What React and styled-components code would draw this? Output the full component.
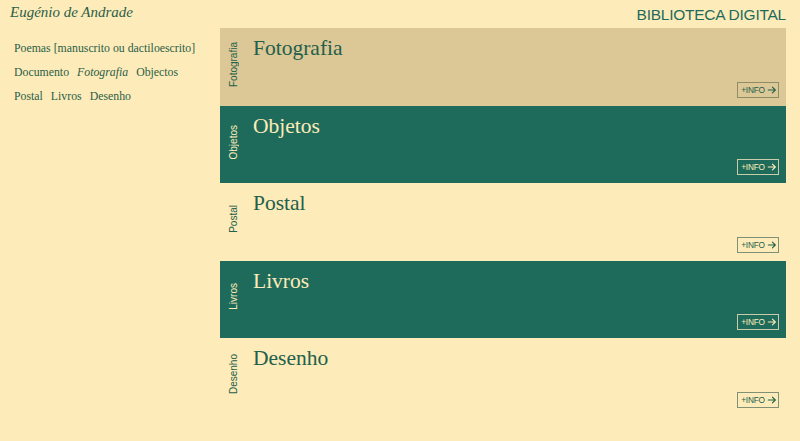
import React from "react";
import styled, { createGlobalStyle } from "styled-components";

const GlobalStyle = createGlobalStyle`
  html, body {
    margin: 0;
    padding: 0;
    background: #fdebb9;
  }
  body {
    font-family: "Liberation Serif", "Times New Roman", serif;
    color: #22604b;
  }
`;

const Page = styled.div`
  width: 800px;
  min-height: 441px;
  background: #fdebb9;
`;

const Header = styled.header`
  height: 28px;
  display: flex;
  align-items: center;
  justify-content: space-between;
  padding: 0 14px 0 10px;
  box-sizing: border-box;
`;

const Author = styled.h1`
  margin: 0;
  font-family: "Liberation Serif", serif;
  font-style: italic;
  font-weight: normal;
  font-size: 15px;
  color: #2b5e48;
  transform: translateY(-2px);
`;

const Brand = styled.div`
  font-family: "Liberation Sans", Arial, sans-serif;
  font-size: 15.5px;
  letter-spacing: -0.25px;
  color: #1f6b5b;
  transform: translateY(1px);
`;

const Body = styled.div`
  display: grid;
  grid-template-columns: 220px 1fr;
  padding-right: 14px;
`;

const Sidebar = styled.nav`
  padding: 8px 0 0 14px;
  display: flex;
  flex-direction: column;
`;

const NavRow = styled.div`
  display: flex;
  gap: 8px;
  height: 24px;
  align-items: center;
  font-size: 11.8px;
  color: #2b5e48;
`;

const NavLink = styled.span`
  font-style: ${(p) => (p.$active ? "italic" : "normal")};
`;

const List = styled.main`
  display: flex;
  flex-direction: column;
`;

const themes = {
  tan: { bg: "#dcc796", fg: "#22604b", title: "#22604b", border: "#8f8d66" },
  green: { bg: "#1f6b5b", fg: "#fdebb9", title: "#fdebb9", border: "#c9ccab" },
  plain: { bg: "#fdebb9", fg: "#22604b", title: "#22604b", border: "#7f9077" },
};

const Card = styled.section`
  height: 77.5px;
  display: grid;
  grid-template-columns: 26px 1fr;
  background: ${(p) => themes[p.$tone].bg};
  color: ${(p) => themes[p.$tone].fg};
`;

const SideLabel = styled.div`
  display: flex;
  align-items: center;
  justify-content: center;
  padding-left: 1px;
  padding-bottom: 5px;
`;

const SideText = styled.span`
  writing-mode: vertical-rl;
  transform: rotate(180deg);
  font-family: "Liberation Sans", Arial, sans-serif;
  font-size: 10px;
  white-space: nowrap;
`;

const Content = styled.div`
  display: flex;
  flex-direction: column;
  padding: 8px 7px 8px 7px;
`;

const Title = styled.h2`
  margin: 0;
  font-family: "Liberation Serif", serif;
  font-weight: normal;
  font-size: 21.5px;
  line-height: 24px;
  color: ${(p) => themes[p.$tone].title};
`;

const InfoButton = styled.button`
  margin-top: auto;
  align-self: flex-end;
  height: 16px;
  width: 42px;
  padding: 0 0 0 2px;
  display: flex;
  align-items: center;
  justify-content: center;
  gap: 2px;
  background: transparent;
  border: 1px solid ${(p) => themes[p.$tone].border};
  color: ${(p) => themes[p.$tone].fg};
  font-family: "Liberation Sans", Arial, sans-serif;
  font-size: 8.3px;
  letter-spacing: -0.2px;
  cursor: pointer;
`;

const Arrow = styled.svg`
  width: 10px;
  height: 10px;
  display: block;
`;

const ArrowIcon = () => (
  <Arrow viewBox="0 0 12 12" fill="none" stroke="currentColor" strokeWidth="1.3" strokeLinecap="round" strokeLinejoin="round">
    <path d="M1.5 6h8.5M6.5 2.5 10 6l-3.5 3.5" />
  </Arrow>
);

const collections = [
  { name: "Fotografia", tone: "tan" },
  { name: "Objetos", tone: "green" },
  { name: "Postal", tone: "plain" },
  { name: "Livros", tone: "green" },
  { name: "Desenho", tone: "plain" },
];

const navRows = [
  [{ label: "Poemas [manuscrito ou dactiloescrito]" }],
  [{ label: "Documento" }, { label: "Fotografia", active: true }, { label: "Objectos" }],
  [{ label: "Postal" }, { label: "Livros" }, { label: "Desenho" }],
];

export default function App() {
  return (
    <Page>
      <GlobalStyle />
      <Header>
        <Author>Eugénio de Andrade</Author>
        <Brand>BIBLIOTECA DIGITAL</Brand>
      </Header>
      <Body>
        <Sidebar>
          {navRows.map((row, i) => (
            <NavRow key={i}>
              {row.map((item) => (
                <NavLink key={item.label} $active={item.active}>
                  {item.label}
                </NavLink>
              ))}
            </NavRow>
          ))}
        </Sidebar>
        <List>
          {collections.map((c) => (
            <Card key={c.name} $tone={c.tone}>
              <SideLabel>
                <SideText>{c.name}</SideText>
              </SideLabel>
              <Content>
                <Title $tone={c.tone}>{c.name}</Title>
                <InfoButton $tone={c.tone}>
                  +INFO <ArrowIcon />
                </InfoButton>
              </Content>
            </Card>
          ))}
        </List>
      </Body>
    </Page>
  );
}
